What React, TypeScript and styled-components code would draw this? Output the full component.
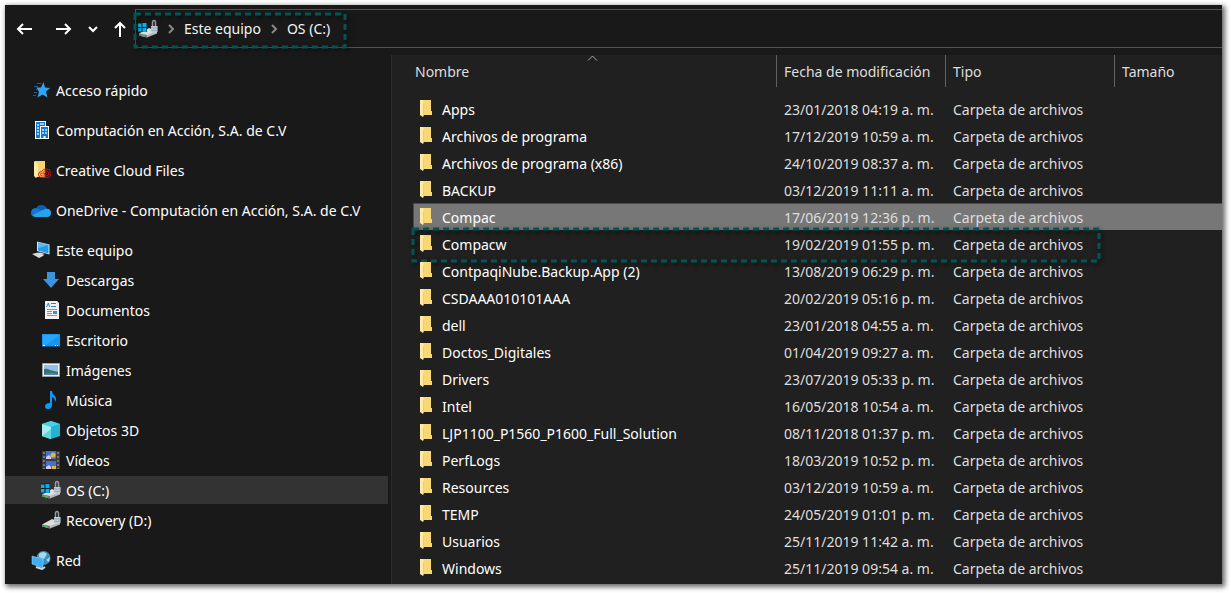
import React from "react";
import styled, { createGlobalStyle, css } from "styled-components";

const Global = createGlobalStyle`
  * { box-sizing: border-box; }
  body {
    margin: 0;
    background: #fff;
    font-family: "Noto Sans", "Segoe UI", sans-serif;
    font-size: 14px;
    line-height: 20px;
  }
`;

const Explorer = styled.div`
  margin: 5px 9px 9px 5px;
  background: #191919;
  color: #fff;
  box-shadow: 2px 2px 5px 1px rgba(0, 0, 0, 0.6);
`;

const Toolbar = styled.header`
  display: flex;
  height: 50px;
  padding-top: 4px;
`;

const NavButtons = styled.div`
  display: flex;
  align-items: center;
  gap: 15px;
  width: 130px;
  height: 40px;
  padding-left: 10px;
`;

const HistoryButtons = styled.div`
  display: flex;
  gap: 22px;
`;

const IconButton = styled.button`
  display: flex;
  padding: 0;
  border: 0;
  background: none;
  color: #fff;
`;

const AddressBar = styled.nav`
  flex: 1;
  height: 39px;
  border: 1px solid #535353;
  border-right: 0;
`;

const Crumbs = styled.div`
  position: relative;
  display: flex;
  align-items: center;
  gap: 9px;
  width: 210px;
  height: 37px;
  padding-left: 2px;
`;

const CrumbLink = styled.a`
  color: #f4f4f4;
  text-decoration: none;
  white-space: nowrap;
`;

const Body = styled.div`
  display: flex;
  align-items: stretch;
`;

const Sidebar = styled.nav`
  width: 387px;
  flex: none;
  padding: 10px 3px 9px 0;
  border-right: 1px solid #2b2b2b;
`;

const TreeList = styled.ul`
  margin: 0;
  padding: 0;
  list-style: none;
`;

const TreeItem = styled.li<{ $level: number; $selected?: boolean }>`
  display: flex;
  align-items: center;
  height: 30px;
  margin-top: ${(p) => (p.$level ? 0 : 10)}px;
  padding-left: ${(p) => (p.$level ? 36 : 26)}px;
  ${(p) =>
    p.$selected &&
    css`
      height: 28px;
      margin: 1px 0;
      background: #333;
    `}
`;

const TreeLink = styled.a`
  display: flex;
  align-items: center;
  gap: 5px;
  color: #fff;
  text-decoration: none;
  white-space: nowrap;
`;

const Label = styled.span`
  padding-top: 2px;
`;

const Files = styled.main`
  flex: 1;
  min-width: 0;
  padding: 0 0 3px 21px;
  background: #202020;
`;

const FileTable = styled.table`
  width: 100%;
  table-layout: fixed;
  border-collapse: collapse;
`;

const Col = styled.col<{ $width?: number }>`
  width: ${(p) => (p.$width ? `${p.$width}px` : "auto")};
`;

const HeadCell = styled.th<{ $first?: boolean; $last?: boolean }>`
  position: relative;
  height: 40px;
  padding: 0;
  vertical-align: top;
  text-align: left;
  font-weight: 400;
  color: #dedede;
  white-space: nowrap;

  > span {
    display: block;
    height: 32px;
    padding: 7px 0 0 ${(p) => (p.$first ? 2 : 7)}px;
    border-right: ${(p) => (p.$last ? "0" : "1px solid #636363")};
  }
`;

const SortMark = styled.svg`
  position: absolute;
  top: 0;
  left: 174px;
`;

const Row = styled.tr<{ $selected?: boolean }>`
  position: relative;
  height: 27px;
  ${(p) =>
    p.$selected &&
    css`
      background: #777;
      box-shadow: inset 0 1px #4a4a4a, inset 1px 0 #4a4a4a;
    `}
`;

const Cell = styled.td`
  padding: 2px 0 0 7px;
  color: #dedede;
  white-space: nowrap;
`;

const NameCell = styled(Cell)`
  padding-top: 0;
`;

const FileLink = styled.a`
  display: flex;
  align-items: center;
  gap: 9px;
  color: #fff;
  text-decoration: none;
`;

const CrumbFrame = styled.svg`
  position: absolute;
  top: 2px;
  left: -3px;
  width: 214px;
  height: 37px;
  overflow: visible;
  pointer-events: none;
  filter: drop-shadow(2px 2px 2px rgba(0, 0, 0, 0.6));
`;

const RowFrame = styled(CrumbFrame)`
  top: -3px;
  left: -2px;
  width: 690px;
  height: 36px;
`;

const Dashes = () => (
  <rect x="2" y="2" width="calc(100% - 4px)" height="calc(100% - 4px)"
    fill="none" stroke="#045453" strokeWidth="3" strokeDasharray="6 4" />
);

const Folder = () => (
  <svg width="13" height="18" viewBox="0 0 13 18">
    <path d="M3 0h8v11h1v4H3z" fill="#f8d775" />
    <path d="M0 0h3l1 2v12l-1 3-3-2z" fill="#ffe9a6" />
    <path d="M3 4l1-2v12l-1 3z" fill="#f1cb66" />
  </svg>
);

const Lock = () => (
  <g>
    <path d="M14.500 7V3.500q0-2 1.500-2t1.500 2V7" fill="none" stroke="#989b9d" strokeWidth="1.500" />
    <path d="M13 7h6.500v6q-3 2-6.500 0z" fill="#c3ccd2" />
    <path d="M13 8.500q3 1.500 6.500 0M13 11q3 1.500 6.500 0" fill="none" stroke="#85acc6" />
  </g>
);

const Drive = ({ windows }: { windows?: boolean }) => (
  <svg width="20" height="20" viewBox="0 0 20 20">
    <path d="M1 14.500l10-5.500 8 3v2.500L9 18.500l-8-2z" fill="#b6b8ba" />
    <path d="M1.500 14.500L11 9.500l8 2.500-10 4z" fill="#dededf" />
    <path d="M1 14.500l8 1.500v2.500l-8-2z" fill="#77797b" />
    <path d="M3.500 16l3 .8" stroke="#3fc94a" strokeWidth="1.500" />
    {windows && (
      <>
        <path d="M0 3.500h9V13H0z" fill="#191919" />
        <path d="M0 4.500h3.500v3.500H0zM4.500 4H8.500v4h-4zM0 9h3.500v3.500H0zM4.500 9h4v4h-4z" fill="#00b3f0" />
      </>
    )}
    <Lock />
  </svg>
);

const icons: Record<string, React.ReactNode> = {
  star: (
    <>
      <path d="M12.500 2l1.500 5.500 5 .5-4 3.500 1.500 6-5-3-5 3L8 12 5.500 7.500h4.500z" fill="#2ea6f4" />
      <path d="M6 3.500h4M3 6.500h4M5 9.500h2M3 12.500h3M2 15.500h3" stroke="#1c5e91" />
    </>
  ),
  building: (
    <>
      <path d="M4 1h11v5h3v13H4z" fill="#fff" />
      <path d="M5 2h9v4H9v12H5zM10 7h7v11h-7z" fill="#0f79d3" />
      <path d="M7 4v12M10 3v3M12 3v3M12 9v6M15 9v6" stroke="#cfe8fb" strokeDasharray="2 1" strokeWidth="1.500" />
      <path d="M12.500 16h2v2h-2z" fill="#fff" />
    </>
  ),
  creative: (
    <>
      <path d="M4 1h10v16H4z" fill="#f6d571" />
      <path d="M3 1l4 3v12l-2 2-2-2z" fill="#ffe9a6" />
      <g fill="none" stroke="#d9120f">
        <path d="M7.500 14.500q0-3 3-3 2-3 5-2.500 4.500 .5 4.500 4.500 0 4-4.500 4h-5q-3 0-3-3z" />
        <path d="M9.500 14.500q0-1.500 2-1.500l3 2.500M12 12.500q1.500-2 3.500-1.500 2.500 .5 2.500 2.500t-2.500 2.500h-4q-2 0-2-1.500" />
        <circle cx="14.500" cy="13.500" r="1" />
      </g>
    </>
  ),
  onedrive: (
    <>
      <path d="M5 9q1-4 5.500-4 4 0 5.500 4l-5 5z" fill="#0a5fb4" />
      <path d="M0 13q0-5 5.500-5L14 12l-9 5Q0 17 0 13z" fill="#1177cf" />
      <path d="M14 9q6-1 6 4 0 4-4 4H5q-2 0-3.500-2L12 10z" fill="#28a3ea" />
    </>
  ),
  pc: (
    <>
      <path d="M6 1.500l12.500 3v10L6 11z" fill="#d5e9f6" />
      <path d="M7 2.500l10.500 2.500v8.500L7 10.500z" fill="#249de8" />
      <path d="M7 2.500l10.500 2.500L7 8z" fill="#5ebcf4" />
      <path d="M1 14l6-1.500 6 3-5 2.500zM9 12.500l5 1.500-3 1-4-2z" fill="#d9dbdf" />
    </>
  ),
  download: <path d="M6 2h8v7h4l-8 9-8-9h4z" fill="#3a93e0" />,
  document: (
    <>
      <path d="M4 1h12l2 2v16H4z" fill="#f2f2f2" />
      <path d="M5.500 7l2-4 1 4M10 3.500h5M10 6.500h5" fill="none" stroke="#1e88cf" />
      <path d="M6 9.500h10M6 11.500h5M6 13.500h5M6 15.500h10" stroke="#8b9399" />
      <path d="M12 11h4v3h-4z" fill="#3d8fbd" />
    </>
  ),
  desktop: (
    <>
      <path d="M1 4h18v13H1z" fill="#1696f0" />
      <path d="M2 5h16L5 15H2z" fill="#28a6fb" />
      <path d="M1 16.500h18" stroke="#0b4c86" />
      <path d="M2 15.500h2M14 15.500h1M16 15.500h1" stroke="#fff" />
    </>
  ),
  picture: (
    <>
      <path d="M1.500 3.500h17v13h-17z" fill="#f0f0f0" stroke="#a0a0a0" />
      <path d="M3 5h14v10H3z" fill="#8fc1ec" />
      <path d="M3 9q3-1 6 1l8 2v3H3z" fill="#3d6f70" />
      <path d="M3 14l8-1 6 1v1H3z" fill="#4a87bf" />
    </>
  ),
  music: (
    <path d="M9 1h2q0 3 3 5 2 3 0 6 0-4-3-5v8q0 4-4 4-3 0-3-2.500Q4 13 9 13z" fill="#0e9bf5" />
  ),
  cube: (
    <>
      <path d="M10 1l9 3v12l-9 3-9-3V4z" fill="#22b3d5" />
      <path d="M10 1l9 3-9 3-9-3z" fill="#48d0e4" />
      <path d="M1 4l9 3v12l-9-3z" fill="#a6edf1" />
      <path d="M1 16l9-7v10z" fill="#62d5df" />
    </>
  ),
  video: (
    <>
      <path d="M1 1h18v18H1z" fill="#3b3b3b" />
      <path d="M3 2v17M17 2v17" stroke="#777" strokeWidth="2" strokeDasharray="2 2" />
      <path d="M5 1h10v8H5zM5 11h10v8H5z" fill="#3674e4" />
      <path d="M5 7l3-2 2 2v2H5zM5 17l3-2 2 2v2H5z" fill="#dfc9cf" />
      <circle cx="12" cy="5" r="2.500" fill="#e4b736" />
      <path d="M10 11h4l-2 2z" fill="#d9382d" />
      <path d="M11 16h4v3h-4z" fill="#e4b736" />
    </>
  ),
  network: (
    <>
      <circle cx="12.500" cy="8" r="7" fill="#3c8fb8" />
      <path d="M8 4q4-4 8 0l-3 5-5-2zM15 10l4-3-1 5z" fill="#a5d8ec" />
      <path d="M1 6l11 3v9L1 14z" fill="#3eaef4" stroke="#9edbfc" strokeWidth=".5" />
      <path d="M5 17l6 2 3-2" fill="none" stroke="#cfd3d6" strokeWidth="2" />
    </>
  ),
};

const TreeIcon = ({ name }: { name: string }) => {
  if (name === "osdrive" || name === "drive") return <Drive windows={name === "osdrive"} />;
  return <svg width="20" height="20" viewBox="0 0 20 20">{icons[name]}</svg>;
};

const tree: [string, string, number][] = [
  ["star", "Acceso rápido", 0],
  ["building", "Computación en Acción, S.A. de C.V", 0],
  ["creative", "Creative Cloud Files", 0],
  ["onedrive", "OneDrive - Computación en Acción, S.A. de C.V", 0],
  ["pc", "Este equipo", 0],
  ["download", "Descargas", 1],
  ["document", "Documentos", 1],
  ["desktop", "Escritorio", 1],
  ["picture", "Imágenes", 1],
  ["music", "Música", 1],
  ["cube", "Objetos 3D", 1],
  ["video", "Vídeos", 1],
  ["osdrive", "OS (C:)", 1],
  ["drive", "Recovery (D:)", 1],
  ["network", "Red", 0],
];

const files: [string, string][] = [
  ["Apps", "23/01/2018 04:19 a. m."],
  ["Archivos de programa", "17/12/2019 10:59 a. m."],
  ["Archivos de programa (x86)", "24/10/2019 08:37 a. m."],
  ["BACKUP", "03/12/2019 11:11 a. m."],
  ["Compac", "17/06/2019 12:36 p. m."],
  ["Compacw", "19/02/2019 01:55 p. m."],
  ["ContpaqiNube.Backup.App (2)", "13/08/2019 06:29 p. m."],
  ["CSDAAA010101AAA", "20/02/2019 05:16 p. m."],
  ["dell", "23/01/2018 04:55 a. m."],
  ["Doctos_Digitales", "01/04/2019 09:27 a. m."],
  ["Drivers", "23/07/2019 05:33 p. m."],
  ["Intel", "16/05/2018 10:54 a. m."],
  ["LJP1100_P1560_P1600_Full_Solution", "08/11/2018 01:37 p. m."],
  ["PerfLogs", "18/03/2019 10:52 p. m."],
  ["Resources", "03/12/2019 10:59 a. m."],
  ["TEMP", "24/05/2019 01:01 p. m."],
  ["Usuarios", "25/11/2019 11:42 a. m."],
  ["Windows", "25/11/2019 09:54 a. m."],
];

const Stroke = ({ d, w = 16, h = 16, color = "#fff", width = 2 }: { d: string; w?: number; h?: number; color?: string; width?: number }) => (
  <svg width={w} height={h} viewBox={`0 0 ${w} ${h}`} fill="none" stroke={color} strokeWidth={width}>
    <path d={d} />
  </svg>
);

const Separator = () => <Stroke w={8} h={12} d="M2 2l4 4-4 4" color="#8a8a8a" />;

export default function App() {
  return (
    <>
      <Global />
      <Explorer>
        <Toolbar>
          <NavButtons>
            <HistoryButtons>
              <IconButton aria-label="Atrás"><Stroke w={18} d="M17 8H3M8 3L3 8l5 5" /></IconButton>
              <IconButton aria-label="Adelante"><Stroke w={18} d="M1 8h14M10 3l5 5-5 5" /></IconButton>
            </HistoryButtons>
            <IconButton aria-label="Ubicaciones recientes"><Stroke w={10} h={8} d="M1 2l4 4 4-4" /></IconButton>
            <IconButton aria-label="Arriba"><Stroke w={14} h={18} d="M7 17V3M2 8l5-5 5 5" /></IconButton>
          </NavButtons>
          <AddressBar aria-label="Ruta">
            <Crumbs>
              <Drive windows />
              <Separator />
              <CrumbLink href="#equipo">Este equipo</CrumbLink>
              <Separator />
              <CrumbLink href="#os">OS (C:)</CrumbLink>
              <CrumbFrame><Dashes /></CrumbFrame>
            </Crumbs>
          </AddressBar>
        </Toolbar>
        <Body>
          <Sidebar aria-label="Navegación">
            <TreeList>
              {tree.map(([icon, label, level]) => (
                <TreeItem key={label} $level={level} $selected={icon === "osdrive"}>
                  <TreeLink href="#carpeta"><TreeIcon name={icon} /><Label>{label}</Label></TreeLink>
                </TreeItem>
              ))}
            </TreeList>
          </Sidebar>
          <Files>
            <FileTable>
              <colgroup>
                <Col $width={364} />
                <Col $width={169} />
                <Col $width={169} />
                <Col />
              </colgroup>
              <thead>
                <tr>
                  <HeadCell $first>
                    <span>Nombre</span>
                    <SortMark width="11" height="6" viewBox="0 0 11 6" fill="none" stroke="#a8a8a8">
                      <path d="M1 5.500l4.500-4.500L10 5.500" />
                    </SortMark>
                  </HeadCell>
                  <HeadCell><span>Fecha de modificación</span></HeadCell>
                  <HeadCell><span>Tipo</span></HeadCell>
                  <HeadCell $last><span>Tamaño</span></HeadCell>
                </tr>
              </thead>
              <tbody>
                {files.map(([name, date]) => (
                  <Row key={name} $selected={name === "Compac"}>
                    <NameCell>
                      <FileLink href="#archivo"><Folder /><Label>{name}</Label></FileLink>
                      {name === "Compacw" && <RowFrame><Dashes /></RowFrame>}
                    </NameCell>
                    <Cell>{date}</Cell>
                    <Cell>Carpeta de archivos</Cell>
                    <Cell />
                  </Row>
                ))}
              </tbody>
            </FileTable>
          </Files>
        </Body>
      </Explorer>
    </>
  );
}
